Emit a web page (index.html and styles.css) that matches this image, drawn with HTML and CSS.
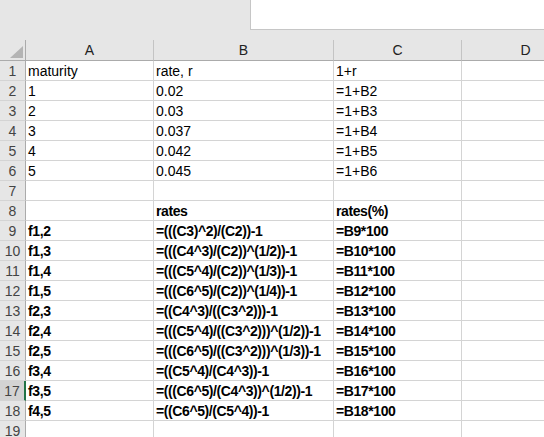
FILE: index.html
```html
<!DOCTYPE html>
<html lang="en">
<head>
  <meta charset="UTF-8">
  <title>Forward rates</title>
  <link rel="stylesheet" href="styles.css">
</head>
<body>
<div class="topbar">
  <div class="namebox"></div>
</div>
<div class="sheet">
  <div class="row head">
    <div class="corner"><span class="tri"></span></div>
    <div class="cell colA">A</div>
    <div class="cell colB">B</div>
    <div class="cell colC">C</div>
    <div class="cell colD">D</div>
  </div>
  <div id="rows"></div>
</div>
<script>
  const rows = [
    ['maturity', 'rate, r', '1+r'],
    ['1', '0.02', '=1+B2'],
    ['2', '0.03', '=1+B3'],
    ['3', '0.037', '=1+B4'],
    ['4', '0.042', '=1+B5'],
    ['5', '0.045', '=1+B6'],
    ['', '', ''],
    ['', 'rates', 'rates(%)', true],
    ['f1,2', '=(((C3)^2)/(C2))-1', '=B9*100', true],
    ['f1,3', '=(((C4^3)/(C2))^(1/2))-1', '=B10*100', true],
    ['f1,4', '=(((C5^4)/(C2))^(1/3))-1', '=B11*100', true],
    ['f1,5', '=(((C6^5)/(C2))^(1/4))-1', '=B12*100', true],
    ['f2,3', '=((C4^3)/((C3^2)))-1', '=B13*100', true],
    ['f2,4', '=(((C5^4)/((C3^2)))^(1/2))-1', '=B14*100', true],
    ['f2,5', '=(((C6^5)/((C3^2)))^(1/3))-1', '=B15*100', true],
    ['f3,4', '=((C5^4)/(C4^3))-1', '=B16*100', true],
    ['f3,5', '=(((C6^5)/(C4^3))^(1/2))-1', '=B17*100', true],
    ['f4,5', '=((C6^5)/(C5^4))-1', '=B18*100', true],
    ['', '', '']
  ];

  const body = document.getElementById('rows');
  rows.forEach((r, i) => {
    const div = document.createElement('div');
    div.className = 'row' + (r[3] ? ' bold' : '');
    const sel = i === 16 ? ' selected' : '';
    div.innerHTML = `<div class="num${sel}">${i + 1}</div>` +
      `<div class="cell colA">${r[0]}</div><div class="cell colB">${r[1]}</div>` +
      `<div class="cell colC">${r[2]}</div><div class="cell colD"></div>`;
    body.appendChild(div);
  });
</script>
</body>
</html>
```

FILE: styles.css
```css
body {
  margin: 0;
  font-family: 'Liberation Sans', Arial, sans-serif;
  font-size: 14px;
  color: #000;
  background: #fff;
  overflow: hidden;
}
.topbar {
  height: 40px;
  background: #e6e6e6;
}
.namebox {
  margin-left: 250px;
  height: 30px;
  background: #fff;
  border-left: 1px solid #c6c6c6;
  border-bottom: 1px solid #c6c6c6;
  box-sizing: border-box;
}
.sheet {
  width: 544px;
  overflow: hidden;
}
.row {
  display: flex;
  height: 20px;
  white-space: nowrap;
}
.row.bold .cell {
  font-weight: bold;
  letter-spacing: -0.4px;
}
.row.head {
  height: 21px;
  background: #e6e6e6;
  color: #222;
}
.cell, .num, .corner {
  box-sizing: border-box;
  flex-shrink: 0;
  height: 100%;
  border-right: 1px solid #d4d4d4;
  border-bottom: 1px solid #d4d4d4;
  overflow: hidden;
  padding: 2px 0 0 2px;
  line-height: 17px;
}
.colA { width: 128px; }
.colB { width: 180px; }
.colC { width: 128px; }
.colD { width: 128px; }
.head .cell, .head .corner {
  border-bottom: 1px solid #ababab;
  border-right: 1px solid #c4c4c4;
  padding: 2px 0 0;
  text-align: center;
  background: linear-gradient(#e6e6e6 0, #e6e6e6 1px, transparent 1px);
}
.corner {
  width: 26px;
  position: relative;
  border-right-color: #ababab !important;
}
.tri {
  position: absolute;
  right: 2px;
  bottom: 2px;
  width: 0;
  height: 0;
  border-left: 13px solid transparent;
  border-bottom: 12px solid #b4b4b4;
}
.num {
  width: 26px;
  background: #e6e6e6;
  color: #444;
  text-align: center;
  padding: 2px 0 0;
  border-right: 1px solid #ababab;
}
.num.selected {
  background: #d3d3d3;
  border-right: 2px solid #217346;
}
```
